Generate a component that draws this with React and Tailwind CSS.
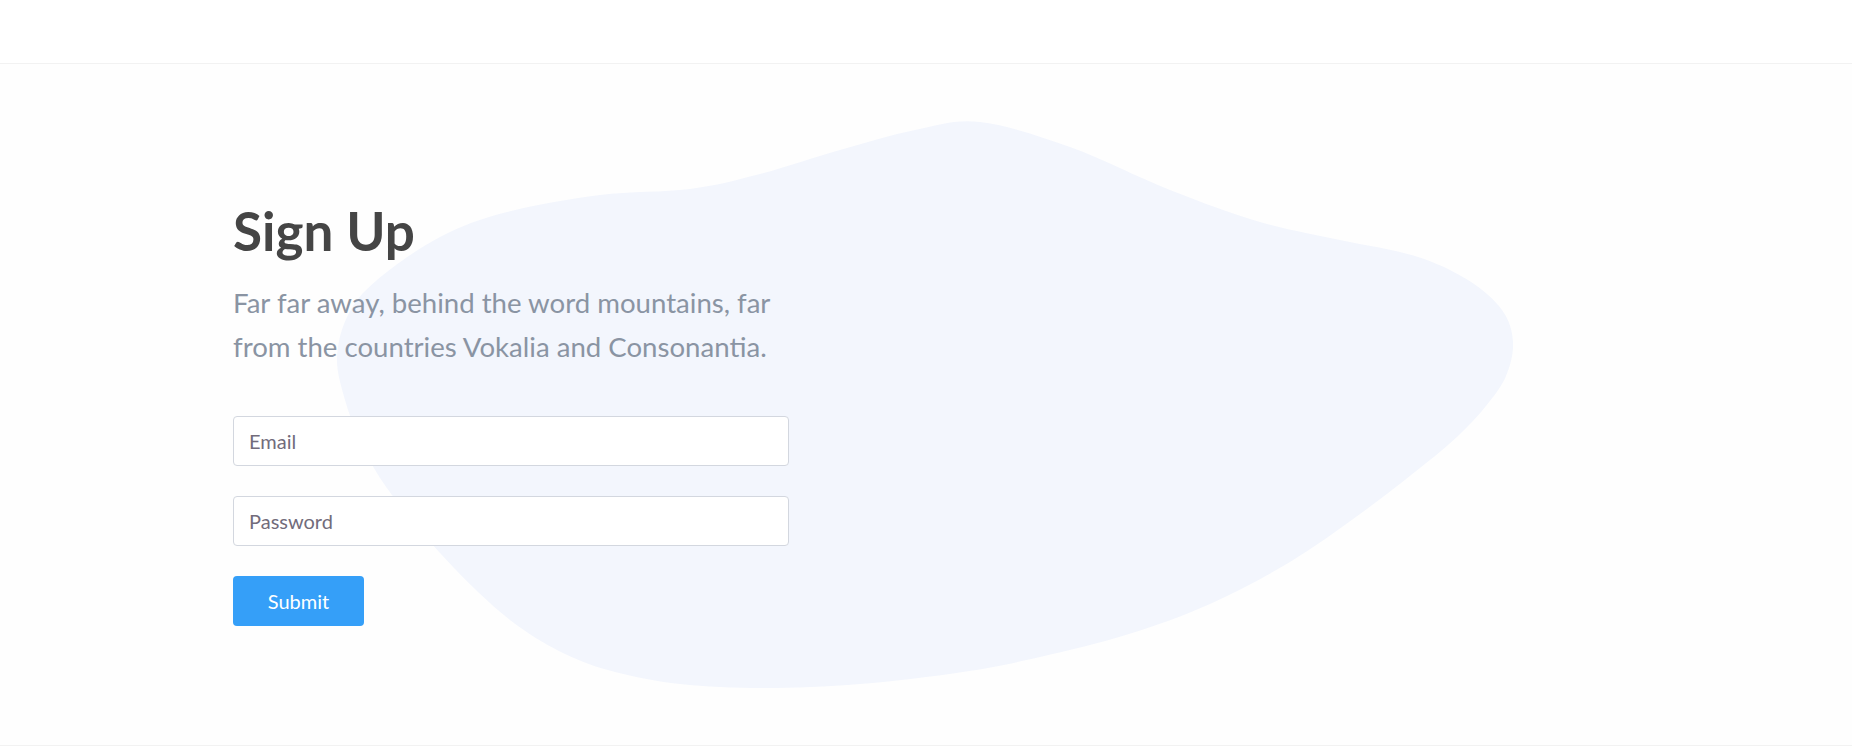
import React from "react";

// blob outline, page coordinates
const blobPoints = [
  [980, 122], [1070, 147], [1170, 190], [1260, 222], [1340, 240], [1415, 256],
  [1468, 280], [1502, 310], [1513, 342], [1506, 376], [1486, 406], [1458, 436],
  [1420, 468], [1360, 514], [1290, 562], [1210, 604], [1129, 634], [1040, 657],
  [963, 672], [860, 684], [764, 688], [680, 684], [615, 672], [565, 654],
  [518, 626], [478, 592], [440, 553], [407, 514], [380, 478], [360, 440],
  [345, 400], [337, 358], [348, 315], [377, 280], [440, 237], [507, 212],
  [600, 195], [690, 189], [760, 174], [840, 150], [915, 130],
];

const smoothPath = (pts) => {
  const n = pts.length;
  let d = `M${pts[0][0]},${pts[0][1]}`;
  for (let i = 0; i < n; i++) {
    const p0 = pts[(i - 1 + n) % n];
    const p1 = pts[i];
    const p2 = pts[(i + 1) % n];
    const p3 = pts[(i + 2) % n];
    const c1 = [p1[0] + (p2[0] - p0[0]) / 6, p1[1] + (p2[1] - p0[1]) / 6];
    const c2 = [p2[0] - (p3[0] - p1[0]) / 6, p2[1] - (p3[1] - p1[1]) / 6];
    d += ` C${c1[0]},${c1[1]} ${c2[0]},${c2[1]} ${p2[0]},${p2[1]}`;
  }
  return d + "Z";
};

const blobPath = smoothPath(blobPoints);

const inputClass =
  "block h-[50px] w-full rounded-[4px] border border-[#d3d7df] bg-white px-[15px] text-[20px] text-[#495057] outline-none placeholder:text-[#726c7b]";

const App = () => {
  return (
    <div className="min-h-[749px] bg-white font-['Lato',sans-serif]">
      {/* top bar */}
      <header className="h-[64px] border-b border-[#f2f2f2] bg-white" />

      {/* sign up section */}
      <section className="relative h-[682px] overflow-hidden border-b border-[#f2f2f2] bg-[#fefefe]">
        <svg className="absolute left-0 top-0" width="1852" height="682" viewBox="0 64 1852 682">
          <path d={blobPath} fill="#f3f6fd" />
        </svg>

        <div className="relative mx-auto max-w-[1416px] px-[15px] pt-[135px]">
          <div className="w-[556px]">
            <h2 className="text-[53px] font-bold leading-[1.2] text-[#454545]">Sign Up</h2>
            <p className="mt-[18px] text-[27.6px] leading-[44px] text-[#8a94a3]">
              Far far away, behind the word mountains, far from the countries Vokalia and Consonantia.
            </p>

            <form className="mt-[47px] space-y-[30px]" onSubmit={(e) => e.preventDefault()}>
              <input type="email" placeholder="Email" className={inputClass} />
              <input type="password" placeholder="Password" className={inputClass} />
              <button
                type="submit"
                className="block h-[50px] w-[131px] rounded-[4px] bg-[#359ff8] text-[20px] text-white"
              >
                Submit
              </button>
            </form>
          </div>
        </div>
      </section>
    </div>
  );
};

export default App;
